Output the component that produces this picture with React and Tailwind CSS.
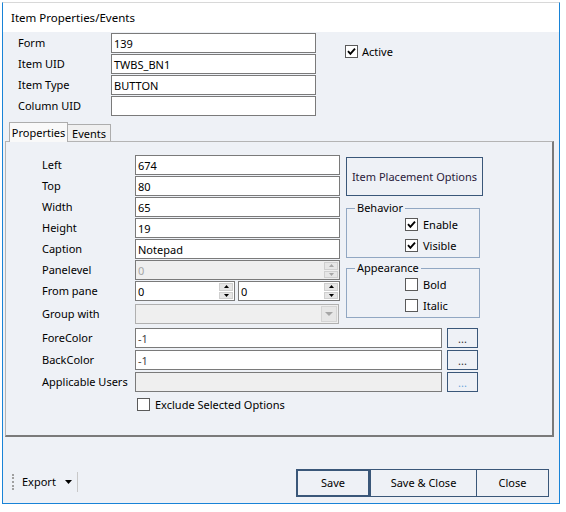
import { useState } from 'react';

const Check = ({ on }) => (
  <span className="w-[13px] h-[13px] border border-[#5a5a5a] bg-white flex items-center justify-center shrink-0">
    {on && (
      <svg width="9" height="9" viewBox="0 0 9 9">
        <path d="M1 4.2 L3.4 6.8 L8 1.6" stroke="#000" strokeWidth="1.9" fill="none" />
      </svg>
    )}
  </span>
);

const Field = ({ value = '', className = '', disabled, muted }) => (
  <div
    className={`h-[20px] border border-[#7a7a7a] px-[2px] flex items-center leading-none ${
      disabled ? 'bg-[#efefef] text-[#a6a6a6]' : 'bg-white'
    } ${muted ? 'text-[#444]' : ''} ${className}`}
  >
    {value}
  </div>
);

const Arrow = ({ up, color = '#000' }) => (
  <svg width="5" height="3" viewBox="0 0 5 3">
    <path d={up ? 'M0 3 L2.5 0 L5 3 Z' : 'M0 0 L5 0 L2.5 3 Z'} fill={color} />
  </svg>
);

// numeric up/down box
const Spinner = ({ value, className = '', disabled }) => (
  <div
    className={`h-[20px] border border-[#7a7a7a] flex ${disabled ? 'bg-[#efefef] text-[#a6a6a6]' : 'bg-white'} ${className}`}
  >
    <span className="flex-1 px-[2px] flex items-center leading-none">{value}</span>
    <div className="w-[16px] flex flex-col gap-[1px] p-[1px]">
      <span className="flex-1 bg-[#e6e6e6] border border-[#cfcfcf] flex items-center justify-center">
        <Arrow up color={disabled ? '#a6a6a6' : '#000'} />
      </span>
      <span className="flex-1 bg-[#e6e6e6] border border-[#cfcfcf] flex items-center justify-center">
        <Arrow color={disabled ? '#a6a6a6' : '#000'} />
      </span>
    </div>
  </div>
);

const Group = ({ title, children }) => (
  <div className="relative w-[134px] h-[50px] border border-[#91a7c2] pt-[9px] pl-[58px] flex flex-col gap-[8px]">
    <span className="absolute left-[8px] -top-[8px] bg-[#eef1f6] px-[2px] leading-[14px]">{title}</span>
    {children}
  </div>
);

const CheckRow = ({ on, label }) => (
  <div className="flex items-center gap-[5px] h-[13px]">
    <Check on={on} />
    <span className="leading-none">{label}</span>
  </div>
);

const DotButton = ({ faint }) => (
  <button className={`w-[31px] h-[20px] ml-[5px] border border-[#3a5779] bg-[#eef1f6] flex items-end justify-center pb-[3px] leading-none text-[11px] ${faint ? 'text-[#6fa8dc]' : 'text-[#333]'}`}>
    ...
  </button>
);

export default function App() {
  const [tab, setTab] = useState('Properties');

  const topRows = [
    ['Form', '139'],
    ['Item UID', 'TWBS_BN1'],
    ['Item Type', 'BUTTON'],
    ['Column UID', ''],
  ];

  const sizeRows = [
    ['Left', '674'],
    ['Top', '80'],
    ['Width', '65'],
    ['Height', '19'],
    ['Caption', 'Notepad'],
  ];

  return (
    <div className="w-[566px] h-[512px] bg-white font-['Noto_Sans',sans-serif] text-[11px] text-black whitespace-nowrap">
      <div className="ml-[2px] mt-[2px] w-[558px] h-[502px] border border-[#1883d7] border-t-[#d8d8d8] flex flex-col">
        {/* Title */}
        <div className="h-[29px] bg-white pl-[8px] flex items-center leading-none text-[11.5px]">Item Properties/Events</div>

        <div className="flex-1 bg-[#eef1f6] flex flex-col">
          {/* Header fields */}
          <div className="pl-[15px] pt-[1px] flex">
            <div className="flex flex-col gap-[1px]">
              {topRows.map(([label, value]) => (
                <div key={label} className="flex items-center">
                  <span className="w-[93px]">{label}</span>
                  <Field value={value} className="w-[205px]" />
                </div>
              ))}
            </div>
            <div className="ml-[29px] mt-[12px] h-[13px] flex items-center gap-[4px]">
              <Check on />
              <span className="leading-none">Active</span>
            </div>
          </div>

          {/* Tab control */}
          <div className="ml-[2px] mt-[5px] w-[549px] flex flex-col">
            <div className="flex items-end pl-[4px] h-[20px]">
              {['Properties', 'Events'].map((t) => (
                <button
                  key={t}
                  onClick={() => setTab(t)}
                  className={`relative border border-b-0 border-[#adadad] leading-none flex items-center justify-center ${
                    t === tab ? 'h-[20px] w-[59px] bg-[#f9f9f9] z-10 -mb-px' : 'h-[17px] w-[44px] bg-[#f0f0f0] -ml-px'
                  }`}
                >
                  {t}
                </button>
              ))}
            </div>
            <div className="h-[296px] border border-[#b4b4b4] border-r-2 border-b-2 border-r-[#7a7a7a] border-b-[#7a7a7a] bg-[#eef1f6] pl-[36px] pt-[13px]">
              <div className="flex">
                {/* Left column */}
                <div className="flex flex-col gap-[1px]">
                  {sizeRows.map(([label, value]) => (
                    <div key={label} className="flex items-center">
                      <span className="w-[93px]">{label}</span>
                      <Field value={value} className="w-[205px]" />
                    </div>
                  ))}
                  <div className="flex items-center">
                    <span className="w-[93px]">Panelevel</span>
                    <Spinner value="0" disabled className="w-[205px]" />
                  </div>
                  <div className="flex items-center">
                    <span className="w-[93px]">From pane</span>
                    <Spinner value="0" className="w-[100px]" />
                    <Spinner value="0" className="w-[102px] ml-[3px]" />
                  </div>
                  <div className="flex items-center mt-[2px]">
                    <span className="w-[93px]">Group with</span>
                    <div className="w-[204px] h-[20px] border border-[#b0b0b0] bg-[#efefef] flex justify-end p-[1px]">
                      <span className="w-[16px] bg-[#e6e6e6] border border-[#d4d4d4] flex items-center justify-center">
                        <svg width="8" height="4" viewBox="0 0 8 4">
                          <path d="M0 0 L8 0 L4 4 Z" fill="#a6a6a6" />
                        </svg>
                      </span>
                    </div>
                  </div>
                </div>

                {/* Right column */}
                <div className="ml-[6px] mt-[2px] flex flex-col">
                  <button className="w-[137px] h-[39px] border border-[#3a5779] bg-[#eef1f6] text-[#2a1a3a] leading-none">
                    Item Placement Options
                  </button>
                  <div className="mt-[12px]">
                    <Group title="Behavior">
                      <CheckRow on label="Enable" />
                      <CheckRow on label="Visible" />
                    </Group>
                  </div>
                  <div className="mt-[10px]">
                    <Group title="Appearance">
                      <CheckRow label="Bold" />
                      <CheckRow label="Italic" />
                    </Group>
                  </div>
                </div>
              </div>

              {/* Colours and users */}
              <div className="mt-[4px] flex flex-col gap-[2px]">
                <div className="flex items-center">
                  <span className="w-[93px]">ForeColor</span>
                  <Field value="-1" muted className="w-[307px]" />
                  <DotButton />
                </div>
                <div className="flex items-center">
                  <span className="w-[93px]">BackColor</span>
                  <Field value="-1" muted className="w-[307px]" />
                  <DotButton />
                </div>
                <div className="flex items-center">
                  <span className="w-[93px]">Applicable Users</span>
                  <Field disabled className="w-[307px]" />
                  <DotButton faint />
                </div>
              </div>
              <div className="mt-[6px] ml-[95px] flex items-center gap-[5px] h-[13px]">
                <Check />
                <span className="leading-none">Exclude Selected Options</span>
              </div>
            </div>
          </div>

          {/* Footer */}
          <div className="mt-auto mb-[6px] flex items-center pr-[10px]">
            <div className="flex items-center pl-[9px] -mt-[2px]">
              <span className="w-[2px] h-[16px] border-l-2 border-dotted border-[#a0a0a0]" />
              <span className="ml-[8px]">Export</span>
              <span className="ml-[9px]">
                <svg width="7" height="4" viewBox="0 0 7 4">
                  <path d="M0 0 L7 0 L3.5 4 Z" fill="#000" />
                </svg>
              </span>
              <span className="ml-[5px] w-px h-[20px] bg-[#c8c8c8]" />
            </div>
            <div className="ml-auto flex">
              <button className="w-[74px] h-[28px] border-2 border-[#3a5779] bg-[#eef1f6]">Save</button>
              <button className="w-[107px] h-[28px] border border-[#3a5779] bg-[#eef1f6]">Save &amp; Close</button>
              <button className="w-[73px] h-[28px] border border-[#3a5779] -ml-px bg-[#eef1f6]">Close</button>
            </div>
          </div>
        </div>
      </div>
    </div>
  );
}
